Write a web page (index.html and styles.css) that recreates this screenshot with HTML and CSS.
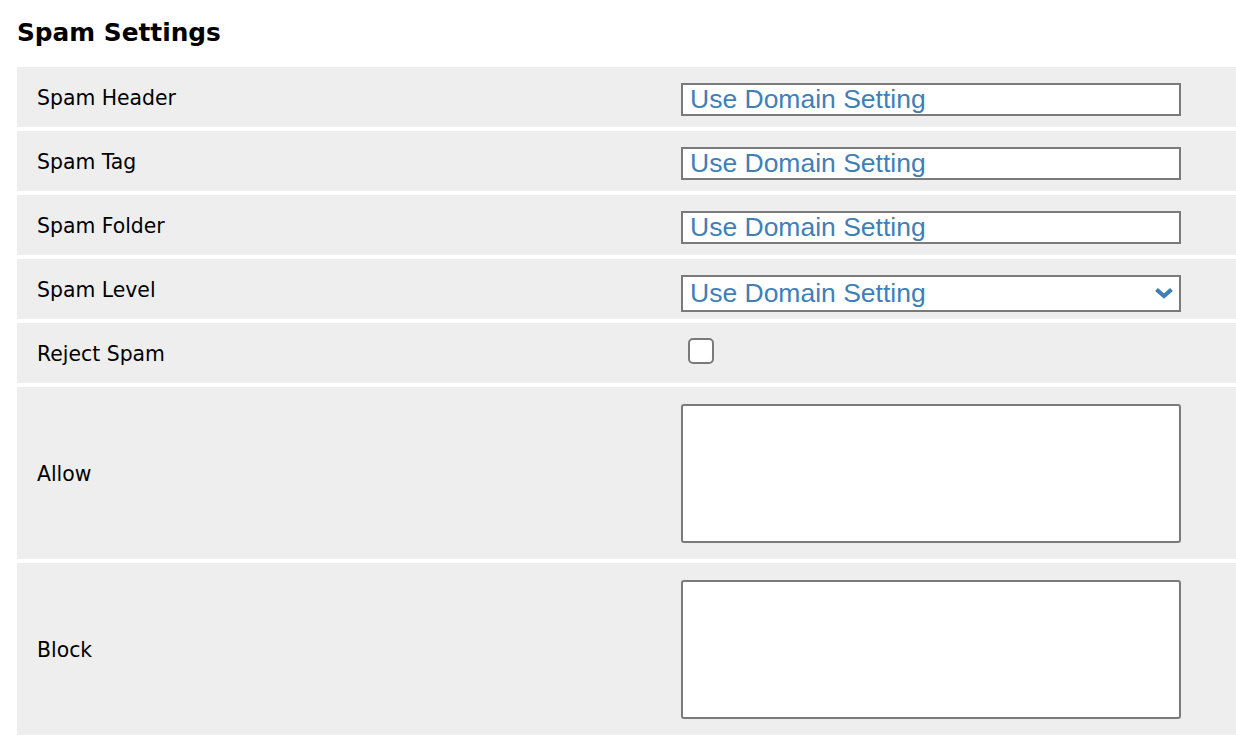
FILE: index.html
```html
<!DOCTYPE html>
<html lang="en">
<head>
    <meta charset="UTF-8">
    <title>Spam Settings</title>
    <link rel="stylesheet" href="styles.css">
</head>
<body>

<h2>Spam Settings</h2>

<div class="settings">
    <div class="row">
        <label for="spam-header">Spam Header</label>
        <div class="field"><input type="text" id="spam-header" value="Use Domain Setting"></div>
    </div>
    <div class="row">
        <label for="spam-tag">Spam Tag</label>
        <div class="field"><input type="text" id="spam-tag" value="Use Domain Setting"></div>
    </div>
    <div class="row">
        <label for="spam-folder">Spam Folder</label>
        <div class="field"><input type="text" id="spam-folder" value="Use Domain Setting"></div>
    </div>
    <div class="row">
        <label for="spam-level">Spam Level</label>
        <div class="field">
            <span class="select-wrap">
                <select id="spam-level">
                    <option>Use Domain Setting</option>
                    <option>Low</option>
                    <option>Medium</option>
                    <option>High</option>
                </select>
                <svg class="chevron" width="20" height="12" viewBox="0 0 20 12">
                    <polyline points="2.5,2.5 10,9 17.5,2.5" fill="none" stroke="#3f7fb8" stroke-width="4.2"/>
                </svg>
            </span>
        </div>
    </div>
    <div class="row">
        <label for="reject-spam">Reject Spam</label>
        <div class="field"><input type="checkbox" id="reject-spam"></div>
    </div>
    <div class="row tall">
        <label for="allow">Allow</label>
        <div class="field"><textarea id="allow"></textarea></div>
    </div>
    <div class="row tall">
        <label for="block">Block</label>
        <div class="field"><textarea id="block"></textarea></div>
    </div>
</div>

</body>
</html>
```

FILE: styles.css
```css
body {
    font-family: 'DejaVu Sans', sans-serif;
    color: #000;
    background: #fff;
    margin: 0;
    padding: 0 0 0 17px;
}
h2 {
    font-size: 24.8px;
    font-weight: bold;
    margin: 18px 0 20px;
    line-height: 29px;
}
.settings {
    display: flex;
    flex-direction: column;
    gap: 4px;
}
.row {
    display: grid;
    grid-template-columns: 664px 1fr;
    align-items: center;
    background: #eeeeee;
    min-height: 60px;
}
.row.tall {
    min-height: 172px;
}
.row label {
    padding: 2px 0 0 20px;
    font-size: 20.4px;
}
.field {
    display: flex;
    align-items: center;
}
input[type="text"], select {
    font-family: 'Liberation Sans', Arial, sans-serif;
    font-size: 26.5px;
    color: #3f7fb8;
    background: #fff;
    border: 2px solid #7a7a7a;
    border-radius: 0;
    box-sizing: border-box;
    width: 500px;
    margin: 0;
    outline: none;
}
input[type="text"] {
    height: 33px;
    padding: 0 7px;
    margin-top: 5px;
}
.select-wrap {
    position: relative;
    display: inline-block;
    margin-top: 8px;
}
select {
    appearance: none;
    -webkit-appearance: none;
    height: 37px;
    padding: 0 40px 0 7px;
}
.chevron {
    position: absolute;
    right: 7px;
    top: 12px;
    pointer-events: none;
}
input[type="checkbox"] {
    appearance: none;
    -webkit-appearance: none;
    width: 26px;
    height: 26px;
    margin: 0 0 4px 7px;
    border: 2px solid #7a7a7a;
    border-radius: 5px;
    background: #fff;
    box-sizing: border-box;
}
textarea {
    width: 500px;
    height: 139px;
    box-sizing: border-box;
    border: 2px solid #7a7a7a;
    border-radius: 3px;
    background: #fff;
    resize: none;
    margin: 0;
}
```
